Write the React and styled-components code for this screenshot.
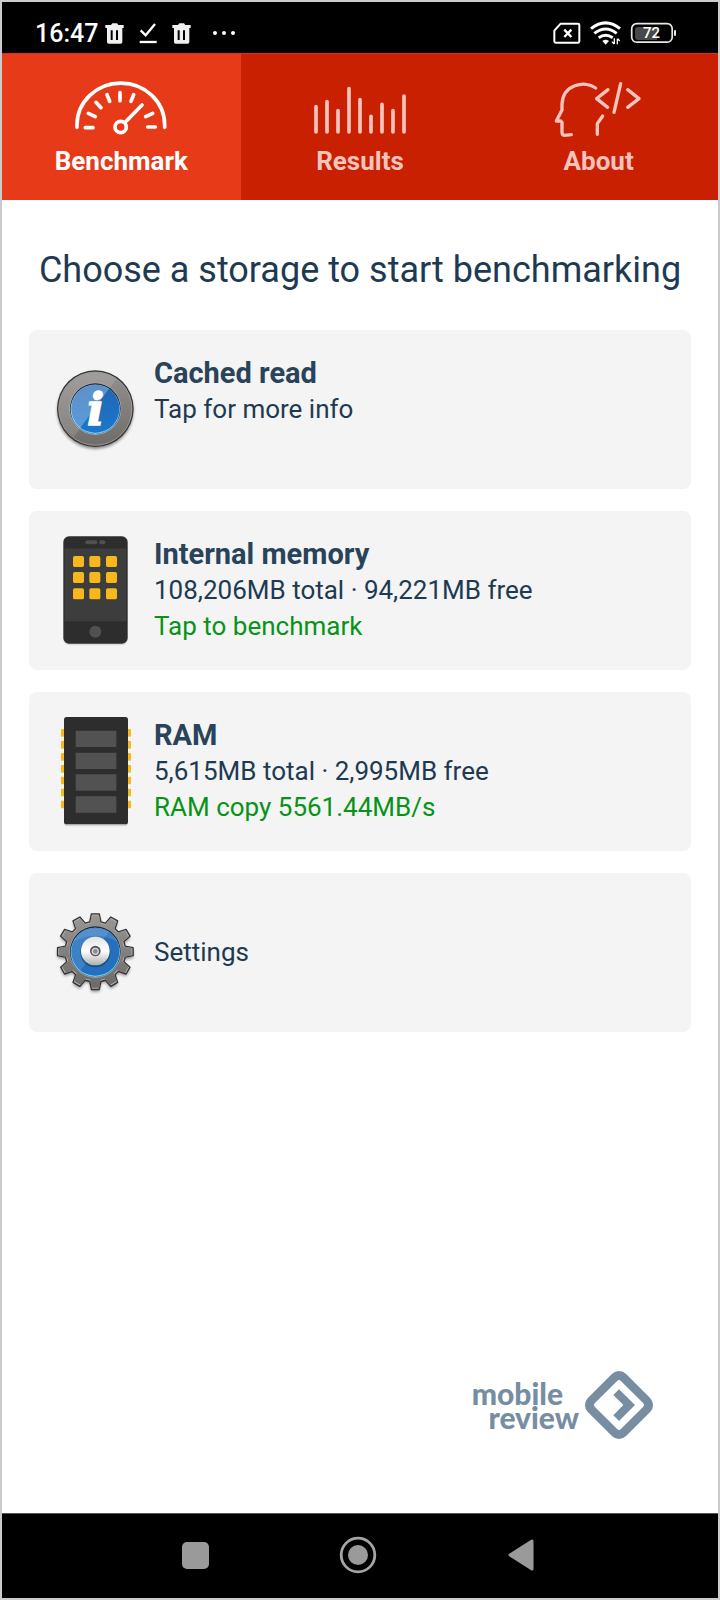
import { useState } from 'react'
import styled, { createGlobalStyle } from 'styled-components'

const GlobalStyle = createGlobalStyle`
* {
    box-sizing: border-box;
}
body {
    margin: 0;
    background: #FFFFFF;
    font-family: Roboto, 'Liberation Sans', sans-serif;
}
button {
    font-family: inherit;
    border: 0;
    padding: 0;
    background: none;
    cursor: pointer;
}
svg {
    display: block;
    flex: none;
    overflow: visible;
}
`

const Screen = styled.div`
display: flex;
flex-direction: column;
min-height: 100vh;
border: 2px solid #CBCBCB;
`

const StatusBar = styled.header`
display: flex;
justify-content: space-between;
align-items: center;
padding: 11px 40px 0 33px;
height: 51px;
background: #000000;
color: #FFFFFF;
`

const StatusGroup = styled.div`
display: flex;
align-items: center;
gap: ${({ $gap }) => $gap}px;
`

const Clock = styled.time`
padding-top: 2px;
font-size: 25px;
font-weight: 500;
line-height: 30px;
`

const MoreBadge = styled.span`
padding-left: 6px;
`

const Tabs = styled.nav`
display: grid;
grid-template-columns: repeat(3, 1fr);
background: #C82000;
border-top: 1px solid #EE2A05;
`

const Tab = styled.button`
display: flex;
flex-direction: column;
align-items: center;
gap: 9px;
padding: 26px 0 23px;
font-size: 26px;
font-weight: 700;
line-height: 32px;
color: ${({ $active }) => ($active ? '#FFFFFF' : '#F6C4BC')};
background: ${({ $active }) => ($active ? '#E73A19' : 'transparent')};
`

const Main = styled.main`
display: flex;
flex-direction: column;
flex: 1;
padding: 48px 27px 0;
`

const Heading = styled.h1`
margin: 0 0 38px;
font-size: 36px;
font-weight: 400;
line-height: 44px;
text-align: center;
color: #1E3A52;
`

const CardList = styled.div`
display: flex;
flex-direction: column;
gap: 22px;
`

const Card = styled.button`
display: flex;
align-items: center;
gap: 17px;
width: 100%;
padding: 19px 24px 20px;
text-align: left;
background: #F4F4F4;
border-radius: 8px;
`

const CardText = styled.span`
display: flex;
flex-direction: column;
justify-content: ${({ $center }) => ($center ? 'center' : 'flex-start')};
min-height: 108px;
font-size: 26px;
line-height: 36px;
color: #1E3A52;
`

const CardTitle = styled.span`
font-size: 29px;
font-weight: 700;
color: #29435A;
`

const CardAction = styled.span`
color: #079318;
`

const Brand = styled.a`
display: flex;
align-items: center;
align-self: flex-end;
gap: 5px;
margin: auto 37px 73px 0;
color: #778DA2;
text-decoration: none;
`

const BrandName = styled.span`
display: flex;
flex-direction: column;
font-family: Lato, 'Liberation Sans', sans-serif;
font-size: 30px;
font-weight: 900;
line-height: 24px;
text-align: right;
`

const BrandLine = styled.span`
padding-right: ${({ $inset }) => $inset}px;
`

const NavBar = styled.nav`
display: flex;
justify-content: center;
padding-right: 4px;
background: #000000;
border-top: 1px solid #555555;
`

const NavButton = styled.button`
display: flex;
justify-content: center;
align-items: center;
width: 163px;
height: 84px;
padding-bottom: 2px;
`

const TrashIcon = () => (
    <svg width="19" height="21" viewBox="0 0 57 63" fill="#F0F0F0">
        <path d="M1 6h17l4-5h14l4 5h16v9H1z" />
        <path fillRule="evenodd" d="M6 15h46v42q0 5-5 5H11q-5 0-5-5zM17 22v29h6V22zM33 22v29h6V22z" />
    </svg>
)

const CheckIcon = () => (
    <svg width="18" height="21" viewBox="0 0 54 63" fill="none" stroke="#FFFFFF">
        <path d="M5 22l15 15L48 3" strokeWidth="7" />
        <path d="M2 57h51" strokeWidth="7" />
    </svg>
)

const DotsIcon = () => (
    <svg width="24" height="6" viewBox="0 0 24 6" fill="#FFFFFF">
        <circle cx="3" cy="3" r="2" />
        <circle cx="12" cy="3" r="2" />
        <circle cx="21" cy="3" r="2" />
    </svg>
)

const SimIcon = () => (
    <svg width="28" height="22" viewBox="98 67 84 66" fill="none" stroke="#FFFFFF">
        <path d="M121 72h52q4 0 4 4v49q0 4-4 4h-67q-4 0-4-4V93z" strokeWidth="6" strokeLinejoin="round" />
        <path d="M132 90l21 22M153 90l-21 22" strokeWidth="7" />
    </svg>
)

const WifiIcon = () => (
    <svg width="31" height="24" viewBox="209 64 93 72" fill="none" stroke="#FFFFFF">
        <path d="M212 87q44-35 87 0" strokeWidth="9" />
        <path d="M222 101q34-26 67 0" strokeWidth="9" />
        <path d="M235 114q21-15 42 0" strokeWidth="9" />
        <path d="M246 124q10-8 20 0l-10 11z" fill="#FFFFFF" stroke="none" />
        <path d="M282 116v17M275 126l6 7M291 134v-17M298 124l-6-7" strokeWidth="4" />
    </svg>
)

const BatteryIcon = () => (
    <svg width="48" height="22" viewBox="0 0 48 22">
        <rect x="1.7" y="1.7" width="40.5" height="18.5" rx="5" fill="none" stroke="#E8E8E8" strokeWidth="1.7" />
        <path d="M8 5h19v13H8q-3 0-3-3V8q0-3 3-3z" fill="#484848" />
        <rect x="44" y="8" width="2" height="6" rx="1" fill="#E8E8E8" />
        <text x="21.5" y="16" fontSize="15" fontWeight="500" fill="#FFFFFF" textAnchor="middle">72</text>
    </svg>
)

const GaugeIcon = () => (
    <svg width="92" height="56" viewBox="222 90 276 168" fill="none" stroke="currentColor" strokeWidth="11" strokeLinecap="round">
        <path d="M228 232v-7a131 125 0 0 1 263 0v7" />
        <path d="M253 233h23M440 231h23M262 190l21 10M285 157l15 16M318 134l8 20M357 128v24M398 134l-8 20M455 190l-21 10M423 165l-49 50" />
        <circle cx="359" cy="231" r="17" />
    </svg>
)

const BARS = [[951, 170], [984, 155], [1017, 182], [1050, 116], [1083, 149], [1116, 199], [1149, 163], [1182, 182], [1215, 138]]

const BarsIcon = () => (
    <svg width="92" height="56" viewBox="945 90 276 168" stroke="currentColor" strokeWidth="11" strokeLinecap="round">
        {BARS.map(([x, top]) => <path key={x} d={`M${x} ${top}V246`} />)}
    </svg>
)

const HeadIcon = () => (
    <svg width="92" height="56" viewBox="578 93 276 168" fill="none" stroke="currentColor" strokeWidth="10" strokeLinecap="round" strokeLinejoin="round">
        <path d="M706 117c-35-24-98-10-101 48v18l-17 33h13l4 4v30q0 9 8 9l20-2" />
        <path d="M727 201l-16 23v32M743 122l-34 27 33 26M781 104l-20 86M802 122l34 27-34 26" />
    </svg>
)

const InfoIcon = () => (
    <svg width="84" height="120" viewBox="99 89 252 360">
        <defs>
            <linearGradient id="infoRing" x1="0" y1="0" x2="0" y2="1">
                <stop offset="0" stopColor="#94908E" />
                <stop offset="1" stopColor="#706C6A" />
            </linearGradient>
            <linearGradient id="infoBlue" x1="0" y1="0" x2="0" y2="1">
                <stop offset="0" stopColor="#2265B5" />
                <stop offset="1" stopColor="#1B77CA" />
            </linearGradient>
            <clipPath id="infoClip"><circle cx="226" cy="268" r="108" /></clipPath>
            <clipPath id="infoCore"><circle cx="226" cy="269" r="74" /></clipPath>
            <filter id="infoShadow" x="-20%" y="-20%" width="140%" height="140%"><feGaussianBlur stdDeviation="4" /></filter>
        </defs>
        <circle cx="226" cy="275" r="114" fill="#000000" opacity="0.45" filter="url(#infoShadow)" />
        <circle cx="226" cy="268" r="115" fill="#333333" />
        <circle cx="226" cy="268" r="110" fill="url(#infoRing)" stroke="#BEBAB8" strokeWidth="2" />
        <path d="M292 176L159 357H90V140h190z" fill="#FFFFFF" opacity="0.13" clipPath="url(#infoClip)" />
        <circle cx="226" cy="268" r="78" fill="#B9B6B5" />
        <circle cx="226" cy="268" r="76" fill="#16253A" />
        <circle cx="226" cy="270" r="74" fill="#6CC8F4" />
        <circle cx="226" cy="268" r="72" fill="url(#infoBlue)" />
        <path d="M273 200L166 346H140V180h130z" fill="#FFFFFF" opacity="0.28" clipPath="url(#infoCore)" />
        <text x="227" y="318" fontFamily="'DejaVu Serif', serif" fontSize="132" fontWeight="700" fontStyle="italic" fill="#FFFFFF" stroke="#FFFFFF" strokeWidth="5" textAnchor="middle">i</text>
    </svg>
)

const PhoneIcon = () => (
    <svg width="84" height="120" viewBox="99 91 252 360">
        <rect x="130" y="115" width="193" height="322" rx="18" fill="#000000" opacity="0.1" />
        <rect x="130" y="110" width="193" height="322" rx="17" fill="#2D2D2D" />
        <rect x="134" y="146" width="185" height="219" fill="#3D3D3D" />
        <rect x="196" y="122" width="36" height="12" rx="6" fill="#515151" />
        <rect x="238" y="122" width="18" height="12" rx="6" fill="#515151" />
        {[169, 217, 266].map((y) => [159, 208, 258].map((x) => (
            <rect key={`${x}-${y}`} x={x} y={y} width="33" height="33" rx="5" fill="#F8B71A" />
        )))}
        <circle cx="226" cy="396" r="18" fill="#515151" />
    </svg>
)

const RamIcon = () => (
    <svg width="84" height="120" viewBox="99 94 252 360">
        {[148, 184, 220, 256, 291, 327, 363].map((y) => (
            <rect key={y} x="123" y={y} width="210" height="23" rx="2" fill="#F8B71A" />
        ))}
        <rect x="132" y="118" width="192" height="322" rx="9" fill="#000000" opacity="0.12" />
        <rect x="132" y="112" width="192" height="322" rx="8" fill="#2D2D2D" />
        {[153, 219, 284, 350].map((y) => (
            <rect key={y} x="167" y={y} width="122" height="49" rx="2" fill="#525252" />
        ))}
    </svg>
)

const gearPath = (cx, cy, outer, root) => {
    const points = []
    for (let i = 0; i < 12; i++) {
        const mid = i * 30
        const corners = [[-10.5, root], [-6, outer], [6, outer], [10.5, root]]
        corners.forEach(([turn, r]) => {
            const a = ((mid + turn) * Math.PI) / 180
            points.push(`${(cx + r * Math.cos(a)).toFixed(1)} ${(cy + r * Math.sin(a)).toFixed(1)}`)
        })
    }
    return `M${points.join('L')}Z`
}

const GearIcon = () => (
    <svg width="84" height="120" viewBox="99 96 252 360">
        <defs>
            <linearGradient id="gearBody" x1="0" y1="0" x2="0" y2="1">
                <stop offset="0" stopColor="#9A9694" />
                <stop offset="1" stopColor="#6D6967" />
            </linearGradient>
            <linearGradient id="gearHub" x1="0" y1="0" x2="0" y2="1">
                <stop offset="0" stopColor="#E4E4E4" />
                <stop offset="0.5" stopColor="#FFFFFF" />
                <stop offset="1" stopColor="#AFAFAF" />
            </linearGradient>
            <clipPath id="gearCore"><circle cx="226" cy="275" r="73" /></clipPath>
            <filter id="gearShadow" x="-20%" y="-20%" width="140%" height="140%"><feGaussianBlur stdDeviation="4" /></filter>
        </defs>
        <path d={gearPath(226, 282, 114, 90)} fill="#000000" opacity="0.4" filter="url(#gearShadow)" />
        <path d={gearPath(226, 275, 114, 91)} fill="#B5B2B0" stroke="#333333" strokeWidth="4" strokeLinejoin="round" />
        <path d={gearPath(226, 275, 109, 86)} fill="url(#gearBody)" />
        <circle cx="226" cy="275" r="78" fill="#AAA7A5" />
        <circle cx="226" cy="275" r="76" fill="#16253A" />
        <circle cx="226" cy="277" r="74" fill="#6CC8F4" />
        <circle cx="226" cy="275" r="72" fill="#2470BD" />
        <path d="M273 207L166 353H140V187h130z" fill="#FFFFFF" opacity="0.12" clipPath="url(#gearCore)" />
        <path d="M160 245a74 74 0 0 1 132 0q-66-35-132 0z" fill="#FFFFFF" opacity="0.12" />
        <circle cx="226" cy="277" r="45" fill="#12406F" opacity="0.7" />
        <circle cx="226" cy="273" r="43" fill="url(#gearHub)" />
        <circle cx="226" cy="273" r="16" fill="#555555" />
        <circle cx="226" cy="274" r="11" fill="#D8D8D8" />
        <circle cx="226" cy="274" r="7" fill="#8B8B8B" />
    </svg>
)

const BrandMark = () => (
    <svg width="70" height="70" viewBox="433 61 210 210">
        <rect x="457" y="85" width="162" height="162" rx="30" fill="currentColor" transform="rotate(45 538 166)" />
        <rect x="483" y="111" width="110" height="110" rx="8" fill="#FFFFFF" transform="rotate(45 538 166)" />
        <path d="M538 119l48 47-48 48-17-17 30-31-30-30z" fill="currentColor" />
    </svg>
)

const TABS = [
    { name: 'Benchmark', Icon: GaugeIcon },
    { name: 'Results', Icon: BarsIcon },
    { name: 'About', Icon: HeadIcon },
]

const STORAGES = [
    { title: 'Cached read', info: 'Tap for more info', Icon: InfoIcon },
    { title: 'Internal memory', info: '108,206MB total · 94,221MB free', action: 'Tap to benchmark', Icon: PhoneIcon },
    { title: 'RAM', info: '5,615MB total · 2,995MB free', action: 'RAM copy 5561.44MB/s', Icon: RamIcon },
    { info: 'Settings', Icon: GearIcon },
]

const App = () => {
    const [active, setActive] = useState('Benchmark')

    return (
        <Screen>
            <GlobalStyle />
            <StatusBar>
                <StatusGroup $gap={15}>
                    <StatusGroup $gap={7}>
                        <Clock>16:47</Clock>
                        <TrashIcon />
                    </StatusGroup>
                    <CheckIcon />
                    <TrashIcon />
                    <MoreBadge><DotsIcon /></MoreBadge>
                </StatusGroup>
                <StatusGroup $gap={9}>
                    <SimIcon />
                    <WifiIcon />
                    <BatteryIcon />
                </StatusGroup>
            </StatusBar>
            <Tabs>
                {TABS.map(({ name, Icon }) => (
                    <Tab key={name} type="button" $active={name === active} onClick={() => setActive(name)}>
                        <Icon />
                        {name}
                    </Tab>
                ))}
            </Tabs>
            <Main>
                <Heading>Choose a storage to start benchmarking</Heading>
                <CardList>
                    {STORAGES.map(({ title, info, action, Icon }) => (
                        <Card key={info} type="button">
                            <Icon />
                            <CardText $center={!title}>
                                {title && <CardTitle>{title}</CardTitle>}
                                <span>{info}</span>
                                {action && <CardAction>{action}</CardAction>}
                            </CardText>
                        </Card>
                    ))}
                </CardList>
                <Brand href="#">
                    <BrandName>
                        <BrandLine $inset={16}>mobile</BrandLine>
                        <BrandLine $inset={0}>review</BrandLine>
                    </BrandName>
                    <BrandMark />
                </Brand>
            </Main>
            <NavBar>
                <NavButton type="button" aria-label="Recent apps">
                    <svg width="27" height="27" viewBox="0 0 27 27"><rect width="27" height="27" rx="5" fill="#9A9A9A" /></svg>
                </NavButton>
                <NavButton type="button" aria-label="Home">
                    <svg width="38" height="38" viewBox="0 0 38 38">
                        <circle cx="19" cy="19" r="16.8" fill="none" stroke="#A5A5A5" strokeWidth="2.8" />
                        <circle cx="19" cy="19" r="10" fill="#9A9A9A" />
                    </svg>
                </NavButton>
                <NavButton type="button" aria-label="Back">
                    <svg width="26" height="32" viewBox="0 0 26 32"><path d="M2 16L24 2v28z" fill="#9A9A9A" stroke="#9A9A9A" strokeWidth="3" strokeLinejoin="round" /></svg>
                </NavButton>
            </NavBar>
        </Screen>
    )
}

export default App
